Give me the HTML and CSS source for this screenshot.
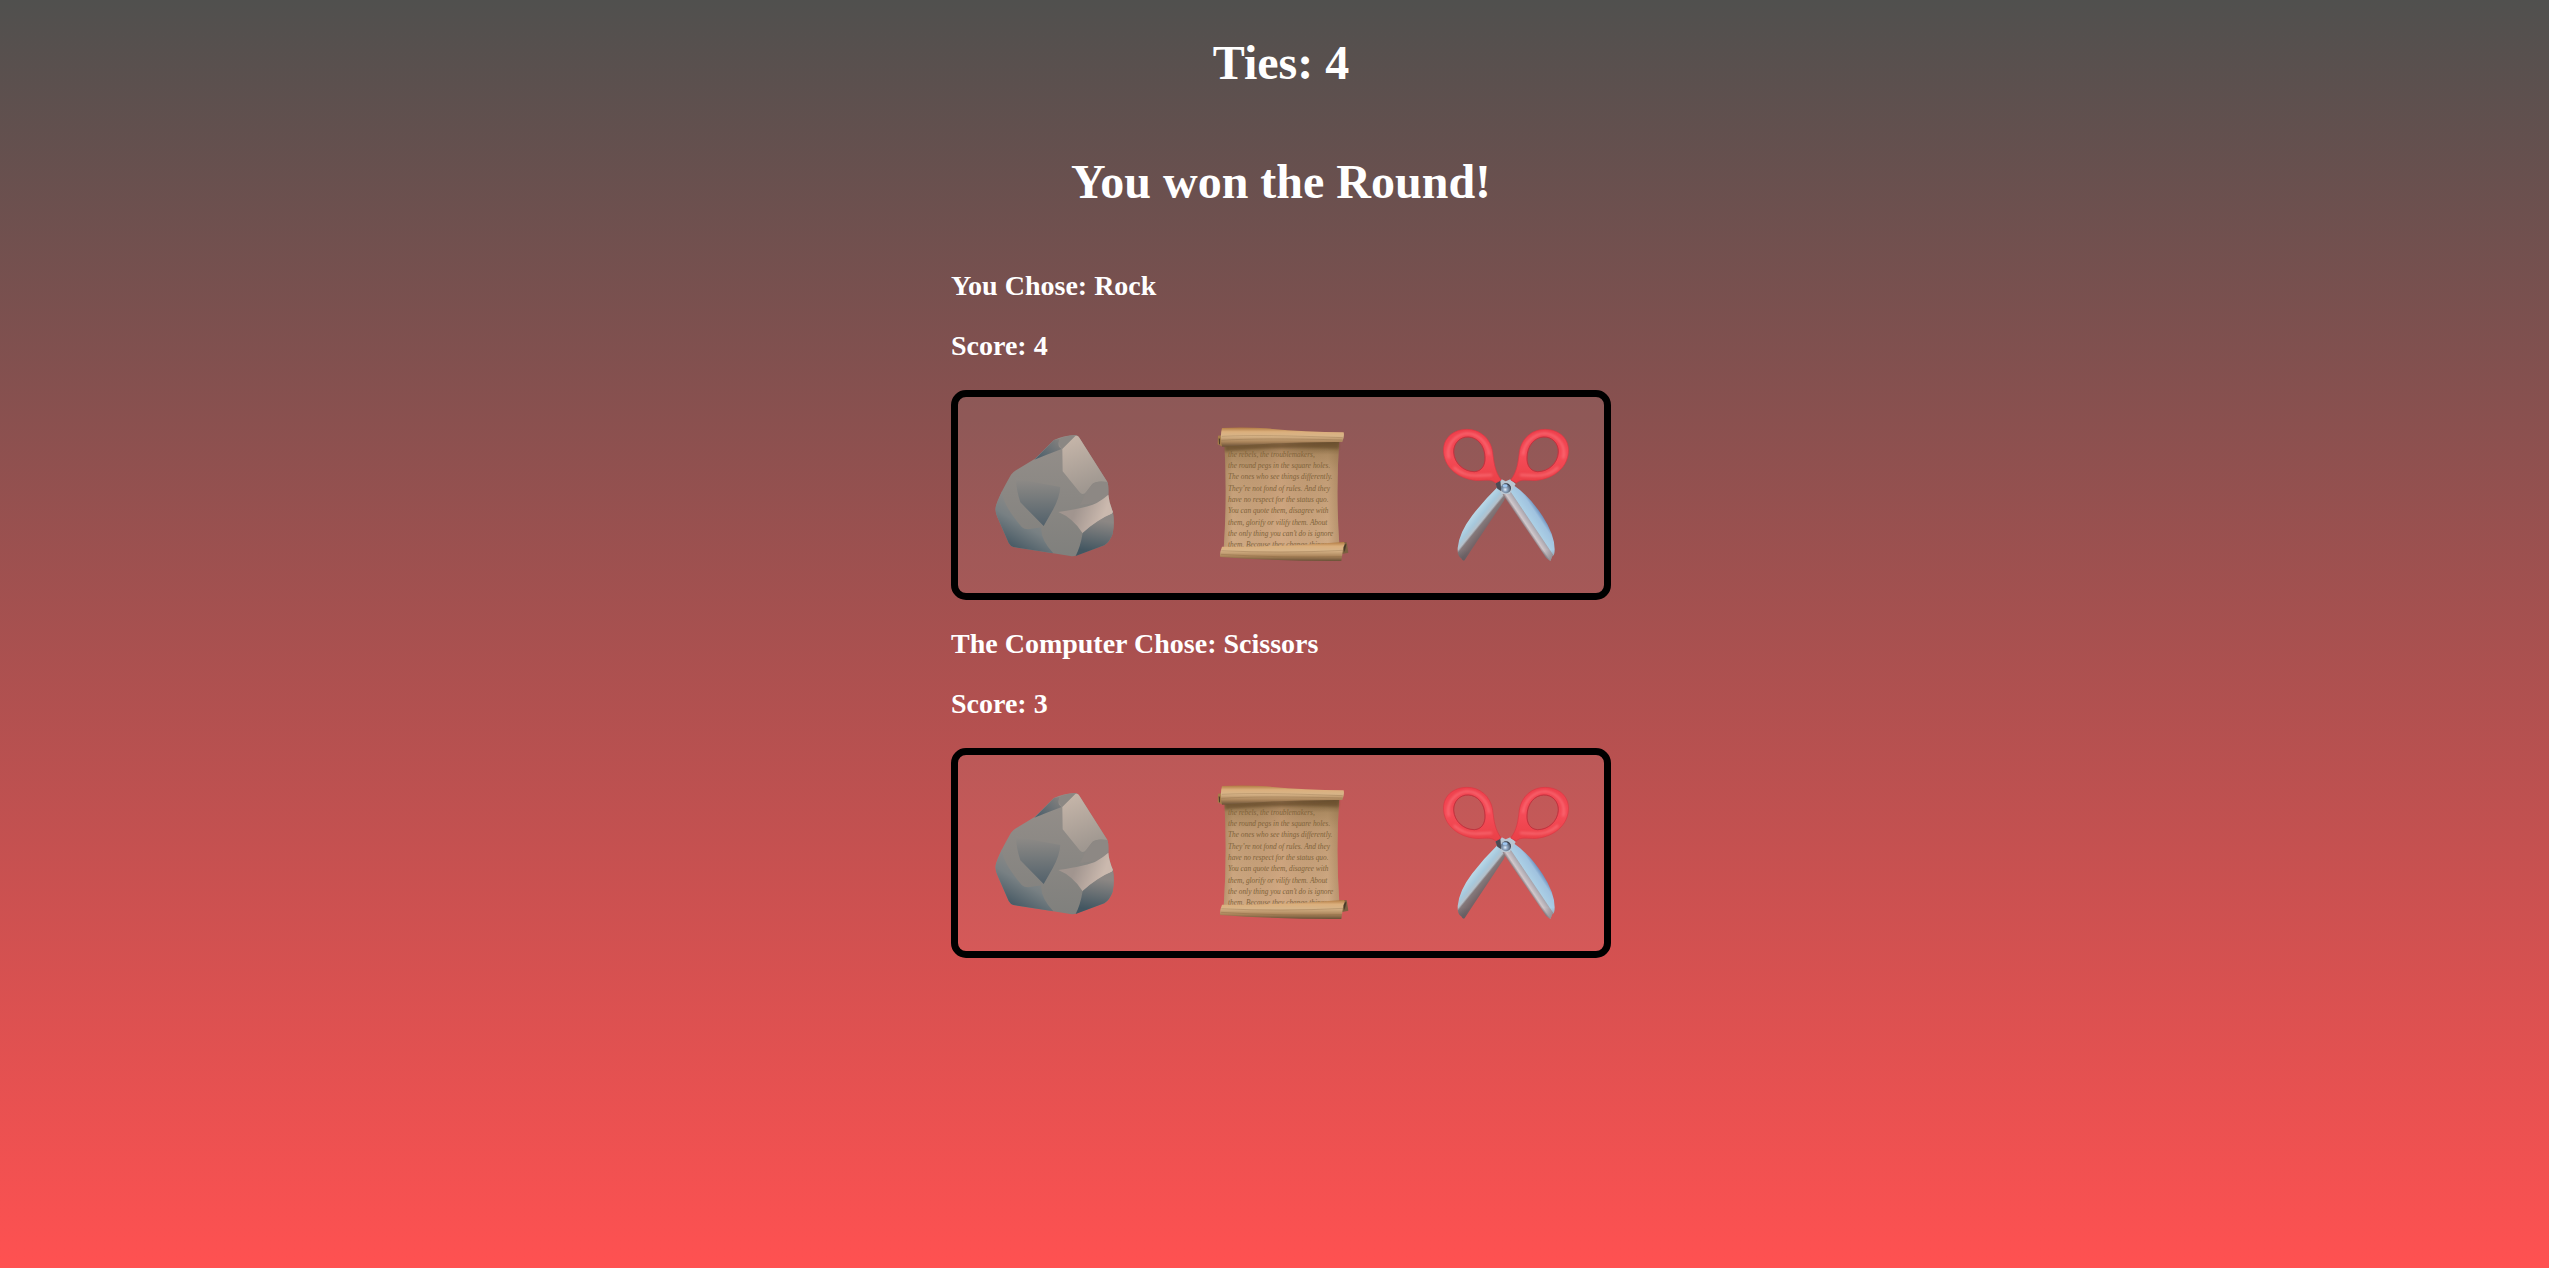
FILE: index.html
```html
<!DOCTYPE html>
<html lang="en">
<head>
<meta charset="utf-8">
<title>Rock Paper Scissors</title>
<link rel="stylesheet" href="styles.css">
</head>
<body>
<svg class="sprites" aria-hidden="true">
  <defs>
    <linearGradient id="base" x1="0" y1="0" x2="0" y2="1"><stop offset="0" stop-color="#958f8a"/><stop offset="1" stop-color="#80807d"/></linearGradient>
    <linearGradient id="facet" x1="0" y1="0" x2="0" y2="1"><stop offset="0" stop-color="#8f8b87"/><stop offset=".4" stop-color="#777b7c"/><stop offset="1" stop-color="#52616b"/></linearGradient>
    <linearGradient id="side" gradientUnits="userSpaceOnUse" x1="150" y1="270" x2="75" y2="400"><stop offset="0" stop-color="#918c88"/><stop offset=".5" stop-color="#788083"/><stop offset="1" stop-color="#475a65"/></linearGradient>
    <linearGradient id="peak" gradientUnits="userSpaceOnUse" x1="245" y1="90" x2="185" y2="150"><stop offset="0" stop-color="#86827f"/><stop offset="1" stop-color="#50626d"/></linearGradient>
    <linearGradient id="light" x1="0" y1="0" x2=".3" y2="1"><stop offset="0" stop-color="#c9b8ab"/><stop offset="1" stop-color="#9f9790"/></linearGradient>
    <linearGradient id="ledge" gradientUnits="userSpaceOnUse" x1="290" y1="290" x2="370" y2="320"><stop offset="0" stop-color="#a1958f"/><stop offset="1" stop-color="#cbb9ae"/></linearGradient>
    <linearGradient id="corner" gradientUnits="userSpaceOnUse" x1="350" y1="330" x2="335" y2="425"><stop offset="0" stop-color="#8c8784"/><stop offset="1" stop-color="#425661"/></linearGradient>

    <linearGradient id="paperFill" x1="0" y1="0" x2="0" y2="1"><stop offset="0" stop-color="#574229"/><stop offset=".06" stop-color="#80643f"/><stop offset=".14" stop-color="#ad8b62"/><stop offset=".3" stop-color="#c19c75"/><stop offset="1" stop-color="#d2ac86"/></linearGradient>
    <linearGradient id="paperEdge" x1="0" y1="0" x2="1" y2="0"><stop offset="0" stop-color="#80603b" stop-opacity=".3"/><stop offset=".08" stop-color="#80603b" stop-opacity="0"/><stop offset=".5" stop-color="#dba783" stop-opacity=".25"/><stop offset=".9" stop-color="#80603b" stop-opacity="0"/><stop offset="1" stop-color="#80603b" stop-opacity=".3"/></linearGradient>
    <linearGradient id="roll" x1="0" y1="0" x2="0" y2="1"><stop offset="0" stop-color="#b07a42"/><stop offset=".22" stop-color="#dbaf7c"/><stop offset=".45" stop-color="#d7b488"/><stop offset=".75" stop-color="#ab855b"/><stop offset="1" stop-color="#695036"/></linearGradient>

    <linearGradient id="bladeL" gradientUnits="userSpaceOnUse" x1="120" y1="310" x2="174" y2="354"><stop offset="0" stop-color="#c5e2ef"/><stop offset=".45" stop-color="#a6c8dc"/><stop offset=".62" stop-color="#b4c0ca"/><stop offset=".7" stop-color="#85797b"/><stop offset="1" stop-color="#746467"/></linearGradient>
    <linearGradient id="bladeR" gradientUnits="userSpaceOnUse" x1="286" y1="350" x2="338" y2="315"><stop offset="0" stop-color="#8c7b80"/><stop offset=".12" stop-color="#d0c8cc"/><stop offset=".36" stop-color="#aaa6ae"/><stop offset=".4" stop-color="#abcfe5"/><stop offset=".8" stop-color="#a0c2df"/><stop offset="1" stop-color="#6c8fbd"/></linearGradient>
    <linearGradient id="tip" x1="0" y1="0" x2="0" y2="1"><stop offset=".85" stop-color="#55585e" stop-opacity="0"/><stop offset="1" stop-color="#55585e" stop-opacity=".55"/></linearGradient>
    <radialGradient id="pin" cx=".42" cy=".62" r=".6"><stop offset="0" stop-color="#e5eef8"/><stop offset=".35" stop-color="#91a9c4"/><stop offset=".75" stop-color="#617084"/><stop offset="1" stop-color="#343b49"/></radialGradient>
    <linearGradient id="handle" x1="0" y1="0" x2="0" y2="1"><stop offset="0" stop-color="#ee3f4b"/><stop offset=".5" stop-color="#f54b57"/><stop offset="1" stop-color="#ea4047"/></linearGradient>
    <filter id="soft"><feGaussianBlur stdDeviation="3"/></filter>
  </defs>

  <symbol id="rock" viewBox="0 15 480 480">
    <path fill="url(#base)" d="M165 146L222 90Q250 77 286 75Q294 76 298 83L382 216Q386 224 385 254Q387 278 399 306Q404 340 398 371Q390 394 373 406L291 436Q281 440 271 438L215 429L100 411Q91 408 86 399L52 321Q44 304 48 287Q54 262 93 194Q98 187 108 181Z"/>
    <path fill="url(#peak)" d="M163 149L222 90L240 86Q233 99 237 110L245 117L200 134Z"/>
    <path fill="#8b8783" d="M238 87Q260 76 289 76L247 116Q234 108 238 87Z"/>
    <path fill="url(#light)" d="M247 117L286 78Q294 76 298 83L382 216Q349 211 337 222L318 247Q308 257 299 247L248 184Z"/>
    <path fill="#8d8884" d="M318 247L337 222Q349 211 382 216Q386 224 385 254Q369 268 350 279L300 285Z"/>
    <path fill="url(#facet)" d="M108 205Q175 220 241 231Q239 263 218 301L191 348L121 277Q108 237 108 205Z"/>
    <path fill="url(#side)" d="M66 244Q68 285 126 352Q132 358 145 358L184 352Q180 386 220 430L100 411Q91 408 86 399L52 321Q44 304 48 287Z"/>
    <path fill="url(#ledge)" d="M235 306Q325 293 350 279Q369 268 385 254Q387 278 399 306L395 312Q355 330 308 370Q279 324 235 306Z"/>
    <path fill="url(#corner)" d="M308 369Q353 328 399 310Q404 340 398 371Q390 394 373 406L287 438Q301 411 308 369Z"/>
  </symbol>

  <symbol id="scissors" viewBox="-22 15 480 480">
    <path fill="url(#bladeL)" d="M204 232L231 253L224 272L106 450Q101 455 96 445Q84 439 85 414Q89 368 128 317Q165 270 204 232Z"/>
    <path fill="url(#tip)" d="M204 232L231 253L224 272L106 450Q101 455 96 445Q84 439 85 414Q89 368 128 317Q165 270 204 232Z"/>
    <path fill="url(#bladeR)" d="M218 250L251 224Q302 259 340 319Q376 375 376 418Q376 437 369 439L363 453L350 443Z"/>
    <path fill="url(#tip)" d="M218 250L251 224Q302 259 340 319Q376 375 376 418Q376 437 369 439L363 453L350 443Z"/>
    <path fill="#b9c6d1" d="M198 220L217 208L229 214L243 208L259 222L241 252L216 252Z"/>
    <path fill="#4b4b54" d="M198 220L213 211L216 244L204 236Z"/>
    <g id="grip">
      <path fill="url(#handle)" fill-rule="evenodd" stroke="#d93743" stroke-width="2" d="M112 58C151 57 184 85 190 126C193 155 197 187 216 210L199 219C189 209 177 210 160 211C105 216 47 182 43 128C39 86 70 59 112 58ZM117 81C92 80 72 100 73 127C75 160 103 185 135 185C157 184 168 166 167 142C166 106 144 82 117 81Z"/>
      <path fill="none" stroke="#ff8088" stroke-opacity=".5" stroke-width="8" stroke-linecap="round" filter="url(#soft)" d="M58 142C50 105 76 74 112 70C146 70 174 97 179 132M76 174Q103 199 147 197L185 195"/>
      <path fill="none" stroke="#b3313c" stroke-opacity=".7" stroke-width="3" d="M117 81C92 80 72 100 73 127C75 160 103 185 135 185C157 184 168 166 167 142C166 106 144 82 117 81Z"/>
    </g>
    <use href="#grip" transform="matrix(-1 0 0 1 460 0)"/>
    <circle cx="230" cy="235" r="15" fill="url(#pin)"/>
    <ellipse cx="227" cy="227" rx="8" ry="4" fill="#9fc7f1"/>
  </symbol>
</svg>

<main class="game">
  <h1 class="headline">Ties: 4</h1>
  <h1 class="headline">You won the Round!</h1>

  <section class="player">
    <h2 class="label">You Chose: Rock</h2>
    <h2 class="label">Score: 4</h2>
    <div class="choices">
      <button class="choice" type="button" aria-label="Rock"><svg class="icon"><use href="#rock"/></svg></button>
      <button class="choice" type="button" aria-label="Paper">
        <svg class="icon" viewBox="3 15 480 480">
          <g id="paper">
            <path fill="url(#paperFill)" d="M73 94L418 88Q407 245 418 405L71 418Q82 260 73 94Z"/>
            <path fill="url(#paperEdge)" d="M73 94L418 88Q407 245 418 405L71 418Q82 260 73 94Z"/>
            <g class="script">
              <text x="84" y="140">the rebels, the troublemakers,</text>
              <text x="84" y="174">the round pegs in the square holes.</text>
              <text x="84" y="208">The ones who see things differently.</text>
              <text x="84" y="242">They’re not fond of rules. And they</text>
              <text x="84" y="276">have no respect for the status quo.</text>
              <text x="84" y="310">You can quote them, disagree with</text>
              <text x="84" y="344">them, glorify or vilify them. About</text>
              <text x="84" y="378">the only thing you can’t do is ignore</text>
              <text x="84" y="412">them. Because they change things.</text>
            </g>
            <path fill="#674c2a" opacity=".6" filter="url(#soft)" d="M76 106L417 95L416 116Q240 107 76 124Z"/>
            <path fill="#a67d4a" d="M68 75L54 77L53 103L68 110Z"/>
            <path fill="#51402b" d="M56 85L60 86L60 104L57 101Z"/>
            <path fill="url(#roll)" d="M66 54Q130 51 200 55Q310 66 431 67Q434 80 427 96Q240 95 66 110Q59 80 66 54Z"/>
            <path fill="none" stroke="#755634" stroke-opacity=".35" stroke-width="2" d="M65 79Q180 73 428 83M64 91Q180 83 428 90"/>
            <path fill="#7b6040" d="M418 397L440 397L445 428L426 432Z"/>
            <path fill="#483a2a" d="M429 403L439 403L434 427Z"/>
            <path fill="url(#roll)" d="M66 410Q245 411 431 396Q438 398 430 412L424 453Q240 454 61 441Q57 434 66 410Z"/>
            <path fill="none" stroke="#755634" stroke-opacity=".4" stroke-width="2" d="M64 422Q240 431 429 421M62 433Q240 444 426 440"/>
          </g>
        </svg>
      </button>
      <button class="choice" type="button" aria-label="Scissors"><svg class="icon"><use href="#scissors"/></svg></button>
    </div>
  </section>

  <section class="player">
    <h2 class="label">The Computer Chose: Scissors</h2>
    <h2 class="label">Score: 3</h2>
    <div class="choices">
      <svg class="icon" role="img" aria-label="Rock"><use href="#rock"/></svg>
      <svg class="icon" role="img" aria-label="Paper" viewBox="3 15 480 480"><use href="#paper"/></svg>
      <svg class="icon" role="img" aria-label="Scissors"><use href="#scissors"/></svg>
    </div>
  </section>
</main>
</body>
</html>
```
FILE: styles.css
```css
* {
  box-sizing: border-box;
}

body {
  margin: 0;
  min-height: 100vh;
  background: linear-gradient(#50504e, #ff5151);
  color: #fff;
  font-family: "Liberation Serif", "Times New Roman", serif;
}

.sprites {
  position: absolute;
  width: 0;
  height: 0;
}

.game {
  display: flex;
  flex-direction: column;
  align-items: center;
  padding: 3px 0 0 13px;
}

.headline {
  margin: 0.67em 0;
  font-size: 48px;
  line-height: 55px;
}

.player {
  width: 660px;
  max-width: 100%;
}

.label {
  margin: 28px 0;
  font-size: 28px;
  line-height: 32px;
}

.choices {
  display: flex;
  justify-content: space-between;
  align-items: center;
  padding: 18px 22px;
  border: 7px solid #000;
  border-radius: 15px;
  background: rgba(255, 255, 255, 0.05);
}

.choice {
  display: block;
  padding: 0;
  border: 0;
  background: none;
  cursor: pointer;
}

.icon {
  display: block;
  width: 160px;
  height: 160px;
}

.script {
  fill: #80633a;
  font-family: "Liberation Serif", "Times New Roman", serif;
  font-size: 22px;
  font-style: italic;
}
```
